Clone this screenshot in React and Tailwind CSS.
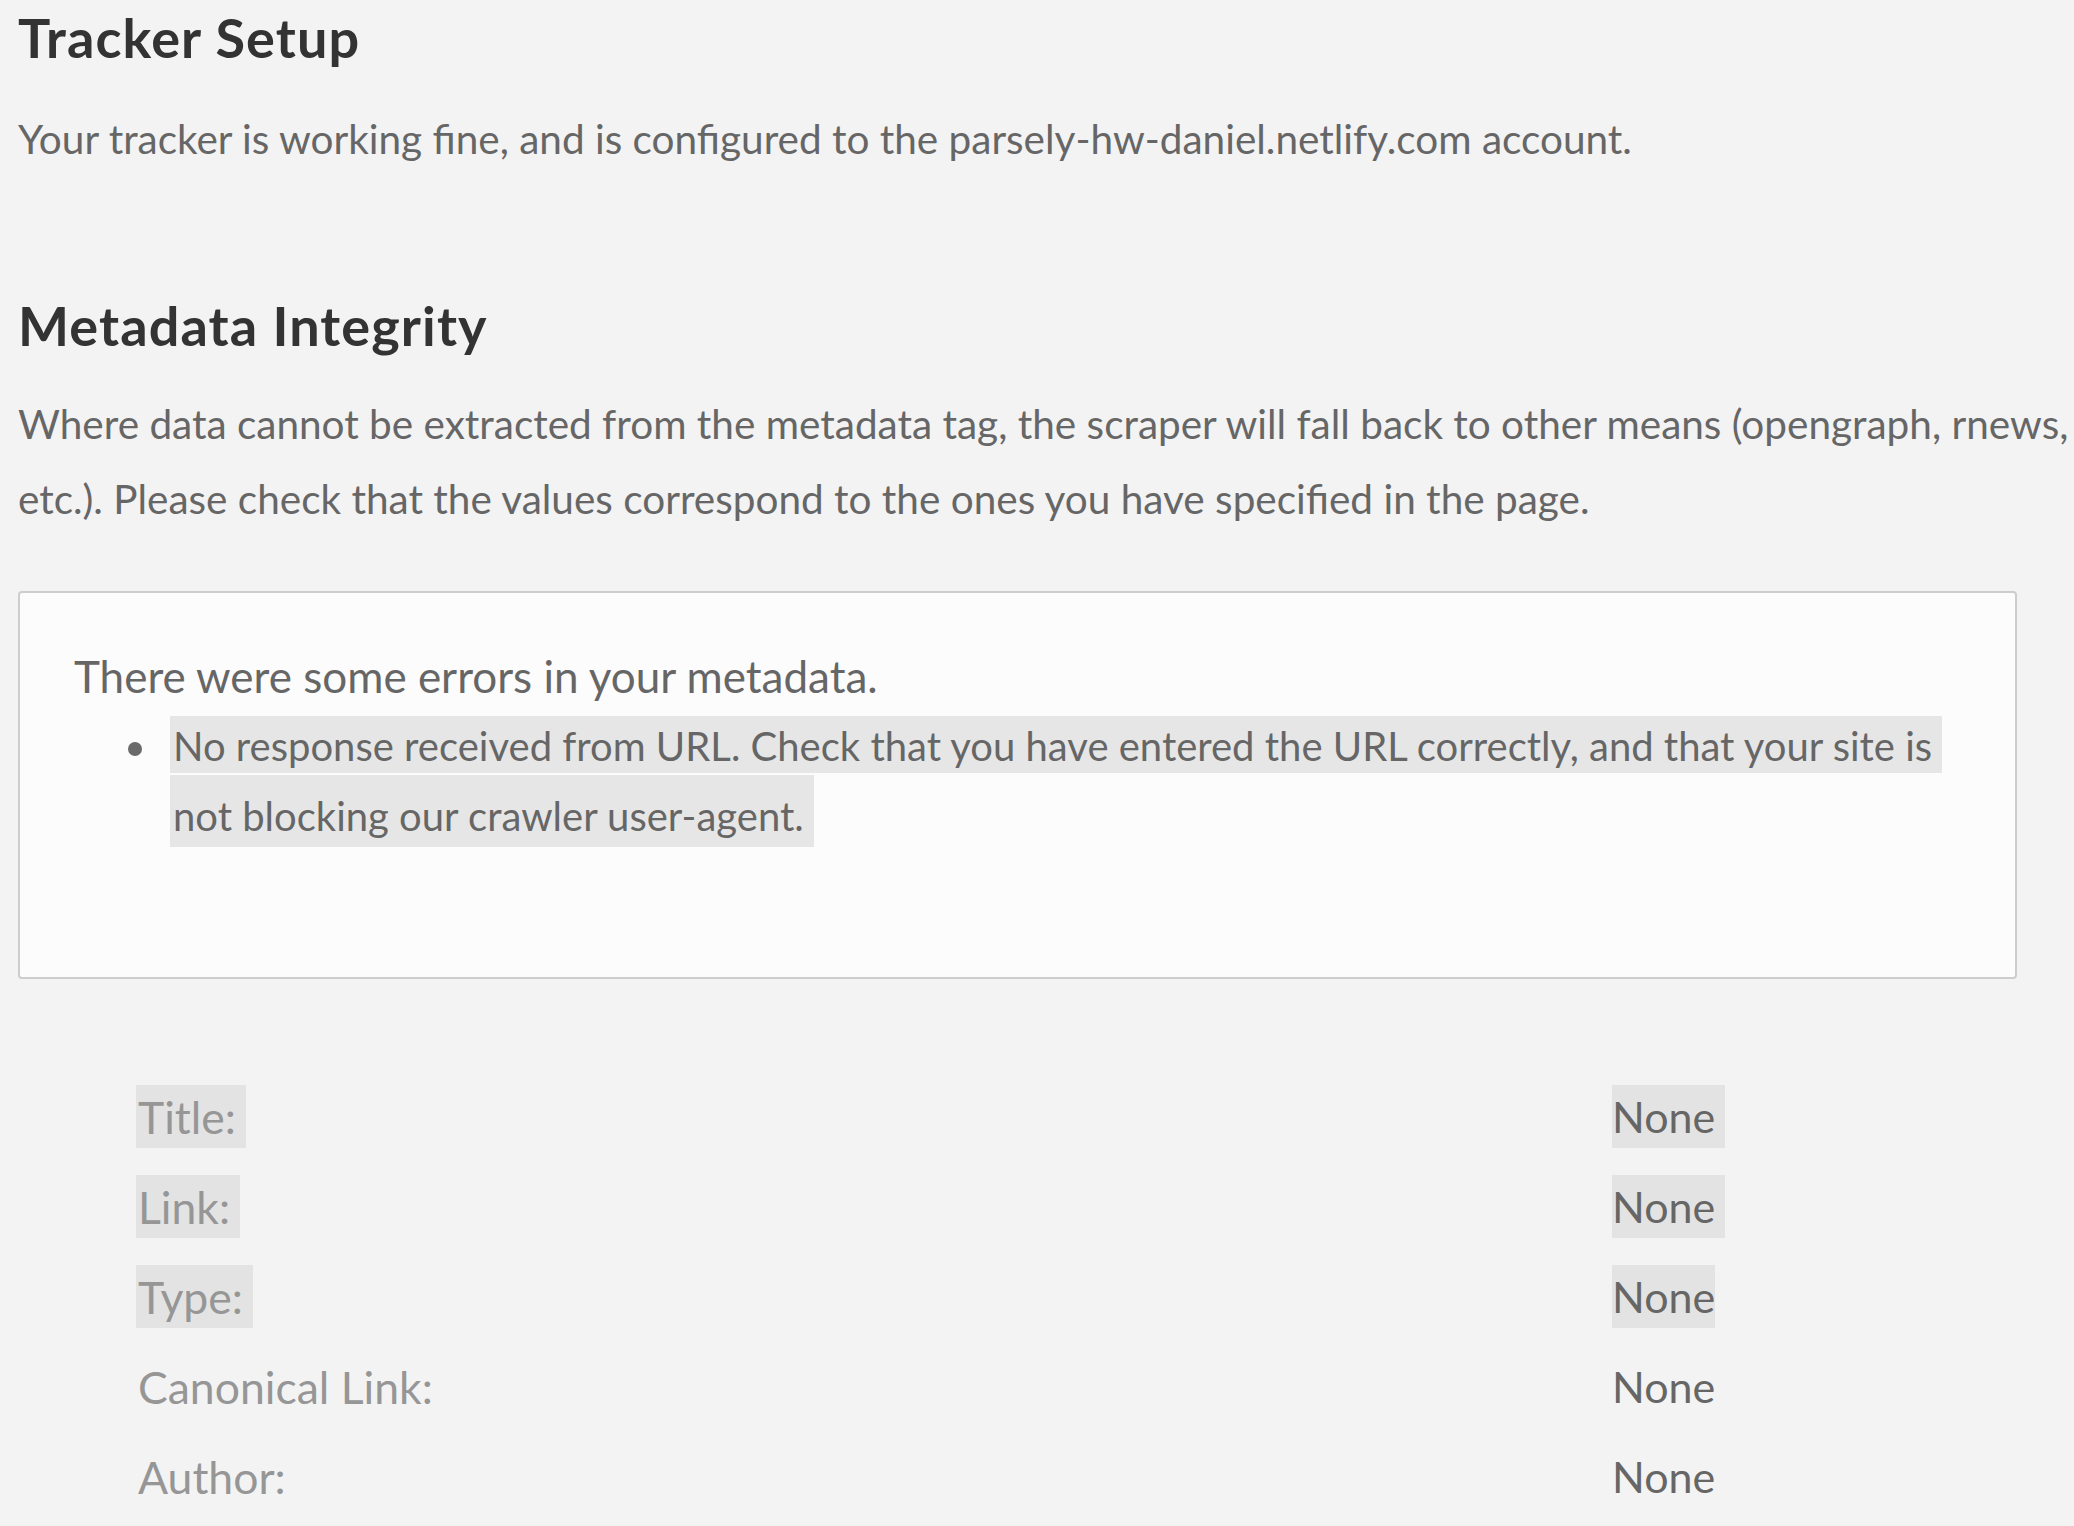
// Tracker setup / metadata integrity report

const FIELDS = [
  { label: 'Title:', value: 'None', marked: true },
  { label: 'Link:', value: 'None', marked: true },
  { label: 'Type:', value: 'None', marked: true, tight: true },
  { label: 'Canonical Link:', value: 'None' },
  { label: 'Author:', value: 'None' },
]

function FieldRow({ label, value, marked, tight }) {
  return (
    <div className="flex h-[90px] leading-[90px]">
      <div className="w-[1476px] text-[44.5px] text-[#969696]">
        <span className={marked ? 'bg-[#e3e3e3] pl-[2px] pr-[10px] py-[5px]' : 'pl-[2px]'}>{label}</span>
      </div>
      <div className="text-[#666]">
        <span className={marked ? (tight ? 'bg-[#e3e3e3] py-[6px]' : 'bg-[#e3e3e3] pr-[10px] py-[6px]') : ''}>
          {value}
        </span>
      </div>
    </div>
  )
}

export default function App() {
  return (
    <div className="min-h-screen bg-[#f3f3f3] pl-[18px] pt-[6px] font-['Lato',sans-serif] text-[40.5px] text-[#666]">
      <h2 className="text-[54px] leading-[64px] font-bold tracking-[1.1px] text-[#333]">Tracker Setup</h2>
      <p className="mt-[31px] leading-[75px]">
        Your tracker is working fine, and is configured to the parsely-hw-daniel.netlify.com account.
      </p>

      <h2 className="mt-[118px] text-[54px] leading-[64px] font-bold tracking-[1.1px] text-[#333]">Metadata Integrity</h2>
      <p className="mt-[28px] leading-[75px] whitespace-nowrap">
        Where data cannot be extracted from the metadata tag, the scraper will fall back to other means (opengraph, rnews,
        <br />
        etc.). Please check that the values correspond to the ones you have specified in the page.
      </p>

      <div className="mt-[55px] w-[1999px] h-[388px] rounded-[4px] border-2 border-[#cdcdcd] bg-[#fcfcfc] pl-[54px] pt-[48px]">
        <div className="text-[44px] leading-[70px]">There were some errors in your metadata.</div>
        <ul className="pl-[54px]">
          <li className="flex items-start">
            <span className="mt-[31px] h-[14px] w-[14px] shrink-0 rounded-full bg-[#6a6a6a]" />
            <span className="ml-[28px] text-[40px] leading-[70px] whitespace-nowrap">
              <span className="bg-[#e6e6e6] pl-[3px] pr-[10px] pt-[6px] pb-[3px]">
                No response received from URL. Check that you have entered the URL correctly, and that your site is
              </span>
              <br />
              <span className="bg-[#e6e6e6] pl-[3px] pr-[10px] pt-[17px] pb-[7px]">not blocking our crawler user-agent.</span>
            </span>
          </li>
        </ul>
      </div>

      <div className="mt-[93px] ml-[118px] text-[43px]">
        {FIELDS.map(f => (
          <FieldRow key={f.label} {...f} />
        ))}
      </div>
    </div>
  )
}
